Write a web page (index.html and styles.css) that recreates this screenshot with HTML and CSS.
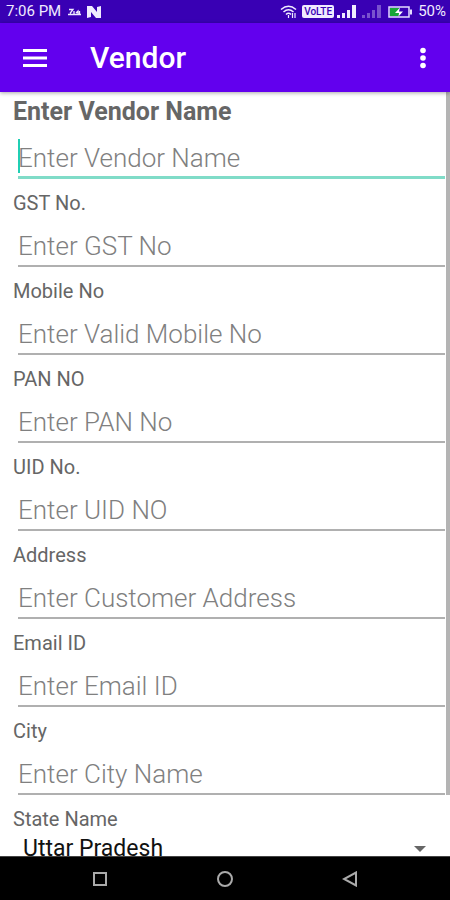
FILE: index.html
```html
<!DOCTYPE html>
<html lang="en">
<head>
<meta charset="utf-8">
<meta name="viewport" content="width=device-width, initial-scale=1">
<title>Vendor</title>
<link rel="stylesheet" href="styles.css">
</head>
<body>
<div class="status">
  <span class="time">7:06 PM</span>
  <svg class="carrier" width="14" height="8" viewBox="0 0 14 8" fill="none" stroke="currentColor" stroke-width="1.3"><path d="M1 1.500h4L2 5.500M0 6.500h13M6 3v3M8 5l2-2v3M11.500 3v3"/></svg>
  <svg width="14" height="12" viewBox="0 0 14 12" fill="currentColor"><path d="M0 0h5l5 6V1l4-1v12H9L4 6v5l-4 1z"/></svg>
  <span class="spacer"></span>
  <svg class="wifi" width="17" height="14" viewBox="0 0 17 14" fill="none" stroke="currentColor" stroke-width="1.500"><path d="M1 4.500Q8.500-2 16 4.500M3.500 7Q8.500 2.500 13.500 7M6 9.500Q8.500 7 11 9.500"/><path d="M8.500 10v3M12.500 8v5M15 8v5" stroke-width="1.200"/></svg>
  <span class="volte">VoLTE</span>
  <svg class="signal" width="19" height="13" viewBox="0 0 19 13" fill="currentColor"><path d="M0 10h3v3H0zM5 8h3v5H5zM10 5h3v8h-3zM15 0h4v13h-4z"/></svg>
  <svg class="signal dim" width="19" height="13" viewBox="0 0 19 13" fill="currentColor"><path d="M0 10h3v3H0zM5 8h3v5H5zM10 5h3v8h-3zM15 0h4v13h-4z"/></svg>
  <svg class="battery" width="25" height="12" viewBox="0 0 25 12"><path d="M1 1h20v10H1z" fill="none" stroke="#e4dcff" stroke-width="1.500"/><path d="M22 3.500h2v5h-2z" fill="#e4dcff"/><path d="M2 2h9v8H2z" fill="#17a637"/><path d="M12 1.500L7 7h4l-.5 3.500L15 5.500h-4z" fill="#fff"/></svg>
  <span class="percent">50%</span>
</div>
<header class="appbar">
  <button class="icon-button" type="button" aria-label="Open menu"><svg width="26" height="20" viewBox="0 0 26 20" fill="currentColor"><path d="M1 1h24v3H1zM1 8.500h24v3H1zM1 16h24v3H1z"/></svg></button>
  <h1>Vendor</h1>
  <button class="icon-button" type="button" aria-label="More options"><svg width="6" height="22" viewBox="0 0 6 22" fill="currentColor"><circle cx="3" cy="3.500" r="2.800"/><circle cx="3" cy="11" r="2.800"/><circle cx="3" cy="18.500" r="2.800"/></svg></button>
</header>
<main class="content">
  <form class="form">
    <div class="field active"><label for="name">Enter Vendor Name</label><div class="entry"><input id="name" type="text" placeholder="Enter Vendor Name"><span class="caret"></span></div></div>
    <div class="field"><label for="gst">GST No.</label><input id="gst" type="text" placeholder="Enter GST No"></div>
    <div class="field"><label for="mobile">Mobile No</label><input id="mobile" type="tel" placeholder="Enter Valid Mobile No"></div>
    <div class="field"><label for="pan">PAN NO</label><input id="pan" type="text" placeholder="Enter PAN No"></div>
    <div class="field"><label for="uid">UID No.</label><input id="uid" type="text" placeholder="Enter UID NO"></div>
    <div class="field"><label for="address">Address</label><input id="address" type="text" placeholder="Enter Customer Address"></div>
    <div class="field"><label for="email">Email ID</label><input id="email" type="email" placeholder="Enter Email ID"></div>
    <div class="field"><label for="city">City</label><input id="city" type="text" placeholder="Enter City Name"></div>
    <div class="field"><label for="state">State Name</label>
      <div class="picker"><select id="state"><option>Uttar Pradesh</option></select><svg class="arrow" width="12" height="6" viewBox="0 0 12 6"><path d="M0 0h12L6 6z" fill="#666"/></svg></div>
    </div>
  </form>
  <div class="scrollbar"></div>
</main>
<nav class="navbar">
  <button type="button" aria-label="Recent apps"><svg width="16" height="16" viewBox="0 0 16 16"><path d="M2 2h12v12H2z"/></svg></button>
  <button type="button" aria-label="Home"><svg width="16" height="16" viewBox="0 0 16 16"><circle cx="8" cy="8" r="7"/></svg></button>
  <button type="button" aria-label="Back"><svg width="16" height="16" viewBox="0 0 16 16"><path d="M14 1.500v13L2 8z"/></svg></button>
</nav>
</body>
</html>
```
FILE: styles.css
```css
* { box-sizing: border-box; }

body {
  margin: 0;
  height: 100vh;
  display: flex;
  flex-direction: column;
  overflow: hidden;
  background: #fff;
  font-family: Roboto, "Liberation Sans", sans-serif;
}

svg { display: block; flex: none; }

button {
  border: 0;
  padding: 0;
  background: none;
  color: inherit;
}

.status {
  flex: none;
  height: 23px;
  padding: 0 4px 0 6px;
  display: flex;
  align-items: center;
  background: #3900b4;
  color: #f0ebff;
  font-size: 15px;
  line-height: 23px;
}

.carrier { margin: 0 5px 0 7px; }
.spacer { flex: 1; }
.wifi { margin-right: 5px; }

.volte {
  width: 32px;
  height: 13px;
  border-radius: 2px;
  background: #f0ebff;
  color: #3900b4;
  font-size: 10px;
  font-weight: 500;
  line-height: 13px;
  text-align: center;
}

.signal { margin-left: 3px; }
.dim { margin-left: 6px; opacity: 0.35; }
.battery { margin: 0 5px 0 7px; }

.appbar {
  flex: none;
  position: relative;
  z-index: 1;
  height: 69px;
  padding: 0 24px 0 22px;
  display: flex;
  align-items: center;
  background: #6200ee;
  color: #fff;
  box-shadow: 0 1px 4px rgba(0, 0, 0, 0.35);
}

.appbar h1 {
  flex: 1;
  margin: 0 0 0 42px;
  font-size: 30px;
  font-weight: 500;
  line-height: 36px;
}

.content {
  flex: 1;
  min-height: 0;
  position: relative;
  overflow: hidden;
}

.form { padding: 0 5px 0 13px; }

.field {
  padding-top: 12px;
  color: #666;
}

.field label {
  display: block;
  font-size: 20px;
  line-height: 24px;
}

.field input {
  display: block;
  width: calc(100% - 5px);
  height: 52px;
  margin-left: 5px;
  padding: 12px 0 0;
  border: 0;
  border-bottom: 2px solid #b0b0b0;
  border-radius: 0;
  outline: 0;
  background: none;
  color: #111;
  font: 300 26px/36px Roboto, "Liberation Sans", sans-serif;
}

.field input::placeholder { color: #808080; opacity: 1; }

.active { padding-top: 5px; }

.active label {
  font-size: 25px;
  font-weight: 700;
  line-height: 30px;
}

.entry { position: relative; }

.active input { border-bottom: 3px solid #80dcc8; }

.caret {
  position: absolute;
  left: 5px;
  top: 12px;
  width: 2px;
  height: 34px;
  background: #20cfb4;
}

.picker {
  display: flex;
  align-items: center;
  padding: 0 19px 0 10px;
}

.picker select {
  flex: 1;
  appearance: none;
  height: 36px;
  padding: 0;
  border: 0;
  background: none;
  color: #111;
  font: 23px/36px Roboto, "Liberation Sans", sans-serif;
}

.scrollbar {
  position: absolute;
  top: 0;
  right: 0;
  width: 4px;
  height: 92%;
  background: #b4b4b4;
}

.navbar {
  flex: none;
  height: 44px;
  border-top: 1px solid #444;
  padding: 0 38px;
  display: flex;
  align-items: center;
  background: #000;
}

.navbar button {
  flex: 1;
  display: flex;
  justify-content: center;
}

.navbar svg {
  fill: none;
  stroke: #aaa;
  stroke-width: 2;
}
```
